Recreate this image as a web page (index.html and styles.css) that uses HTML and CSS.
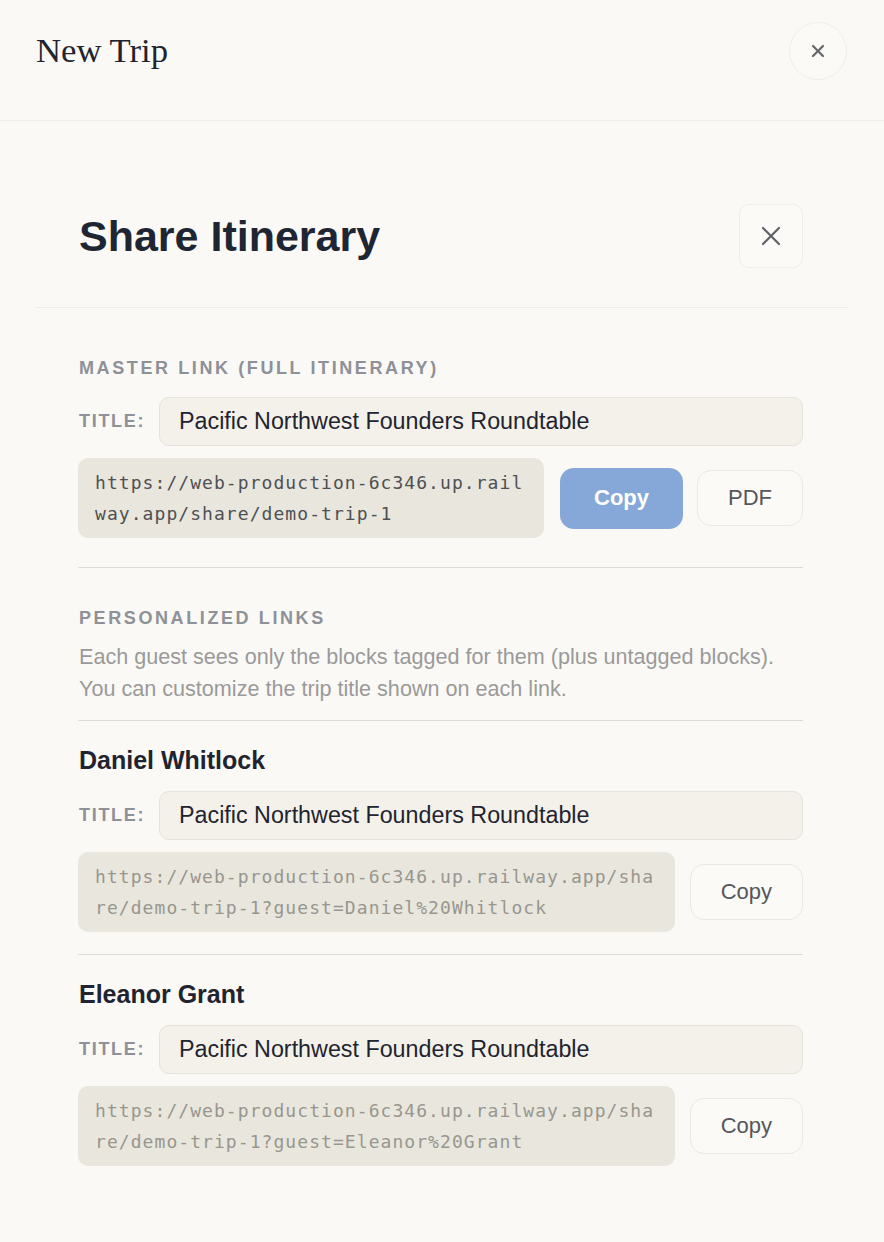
FILE: index.html
```html
<!DOCTYPE html>
<html lang="en">
<head>
<meta charset="utf-8">
<title>New Trip – Share Itinerary</title>
<link rel="stylesheet" href="styles.css">
</head>
<body>
<header class="topbar">
  <h1 class="trip-title">New Trip</h1>
  <button class="round-close" aria-label="Close">
    <svg width="14" height="14" viewBox="0 0 14 14"><path d="M2 2 L12 12 M12 2 L2 12" stroke="#65666b" stroke-width="2.2" stroke-linecap="round"/></svg>
  </button>
</header>

<section class="dialog">
  <div class="dialog-head">
    <h2 class="dialog-title">Share Itinerary</h2>
    <button class="square-close" aria-label="Close">
      <svg width="20" height="20" viewBox="0 0 20 20"><path d="M2 2 L18 18 M18 2 L2 18" stroke="#606166" stroke-width="2.2" stroke-linecap="round"/></svg>
    </button>
  </div>

  <div class="dialog-body">
    <div class="master">
      <div class="section-label">Master link (full itinerary)</div>
      <div class="title-row">
        <span class="title-label">Title:</span>
        <div class="title-input">Pacific Northwest Founders Roundtable</div>
      </div>
      <div class="link-row">
        <div class="url-box url-master">https://web-production-6c346.up.railway.app/share/demo-trip-1</div>
        <button class="btn-primary">Copy</button>
        <button class="btn-ghost btn-pdf">PDF</button>
      </div>
    </div>

    <div class="personal">
      <div class="section-label">Personalized links</div>
      <p class="desc">Each guest sees only the blocks tagged for them (plus untagged blocks).<br>You can customize the trip title shown on each link.</p>
    </div>

    <div class="guest">
      <div class="guest-name">Daniel Whitlock</div>
      <div class="title-row">
        <span class="title-label">Title:</span>
        <div class="title-input">Pacific Northwest Founders Roundtable</div>
      </div>
      <div class="link-row">
        <div class="url-box url-guest">https://web-production-6c346.up.railway.app/share/demo-trip-1?guest=Daniel%20Whitlock</div>
        <button class="btn-ghost btn-copy">Copy</button>
      </div>
    </div>

    <div class="guest">
      <div class="guest-name">Eleanor Grant</div>
      <div class="title-row">
        <span class="title-label">Title:</span>
        <div class="title-input">Pacific Northwest Founders Roundtable</div>
      </div>
      <div class="link-row">
        <div class="url-box url-guest">https://web-production-6c346.up.railway.app/share/demo-trip-1?guest=Eleanor%20Grant</div>
        <button class="btn-ghost btn-copy">Copy</button>
      </div>
    </div>
  </div>
</section>
</body>
</html>
```

FILE: styles.css
```css
* { box-sizing: border-box; }

html, body {
  margin: 0;
  padding: 0;
  background: #faf9f5;
  font-family: "Liberation Sans", Arial, sans-serif;
  color: #1f2430;
}

button {
  font-family: inherit;
  cursor: pointer;
}

.topbar {
  height: 121px;
  padding: 22px 37px 0 36px;
  display: flex;
  justify-content: space-between;
  align-items: flex-start;
  border-bottom: 1px solid #efede8;
}

.trip-title {
  margin: 0;
  font-family: "Liberation Serif", "Times New Roman", serif;
  font-weight: 400;
  font-size: 34.7px;
  line-height: 58px;
  color: #1f2430;
}

.round-close {
  width: 58px;
  height: 58px;
  border-radius: 50%;
  border: 1px solid #f0eee9;
  background: #fbfaf7;
  display: flex;
  align-items: center;
  justify-content: center;
  padding: 0;
}

.dialog {
  margin: 0 36px;
}

.dialog-head {
  padding: 83px 45px 39px 43px;
  display: flex;
  justify-content: space-between;
  align-items: center;
  border-bottom: 1px solid #eeece7;
}

.dialog-title {
  margin: 0;
  font-size: 43px;
  font-weight: 700;
  line-height: 64px;
  color: #1f2633;
}

.square-close {
  width: 64px;
  height: 64px;
  border-radius: 10px;
  border: 1px solid #efede8;
  background: #fbfaf7;
  display: flex;
  align-items: center;
  justify-content: center;
  padding: 0;
}

.dialog-body {
  padding: 0 45px 0 42px;
}

.master {
  padding: 48px 0 29px;
  border-bottom: 1px solid #dddbd5;
}

.section-label {
  font-size: 18px;
  font-weight: 700;
  letter-spacing: 2.6px;
  text-transform: uppercase;
  line-height: 24px;
  color: #8e9197;
  padding-left: 1px;
}

.title-row {
  display: flex;
  align-items: center;
  gap: 15px;
  margin-top: 17px;
}

.title-label {
  font-size: 18px;
  font-weight: 700;
  letter-spacing: 1.7px;
  text-transform: uppercase;
  color: #8e9197;
  width: 66px;
  padding-left: 1px;
}

.title-input {
  flex: 1;
  height: 49px;
  border: 1px solid #e7e3db;
  border-radius: 10px;
  background: #f4f1ea;
  padding: 0 19px;
  display: flex;
  align-items: center;
  font-size: 23.3px;
  color: #1f2430;
}

.link-row {
  display: flex;
  align-items: center;
  margin-top: 12px;
}

.url-box {
  flex: 1;
  background: #e9e6dd;
  border-radius: 10px;
  padding: 9px 17px;
  font-family: "DejaVu Sans Mono", "Liberation Mono", monospace;
  font-size: 18px;
  letter-spacing: 1.06px;
  line-height: 31px;
  word-break: break-all;
  min-height: 80px;
}

.url-master {
  color: #4f5054;
}

.url-guest {
  color: #98968f;
}

.btn-primary {
  margin-left: 16px;
  height: 61px;
  padding: 0 34px;
  border: none;
  border-radius: 14px;
  background: #86a8d9;
  color: #ffffff;
  font-size: 22px;
  font-weight: 700;
}

.btn-ghost {
  height: 56px;
  border: 1px solid #ebe8e2;
  border-radius: 14px;
  background: #fbfaf7;
  color: #55575c;
  font-size: 22px;
}

.btn-pdf {
  margin-left: 14px;
  padding: 0 30px;
}

.btn-copy {
  margin-left: 15px;
  padding: 0 30px;
}

.personal {
  padding-top: 38px;
  padding-bottom: 15px;
}

.desc {
  margin: 11px 0 0;
  font-size: 21.6px;
  line-height: 32px;
  color: #9a9a9a;
  padding-left: 1px;
}

.guest {
  border-top: 1px solid #dddbd5;
  padding: 24px 0 22px;
}

.guest-name {
  font-size: 25px;
  font-weight: 700;
  line-height: 30px;
  color: #1f2430;
  padding-left: 1px;
}

.guest .title-row {
  margin-top: 16px;
}
```
